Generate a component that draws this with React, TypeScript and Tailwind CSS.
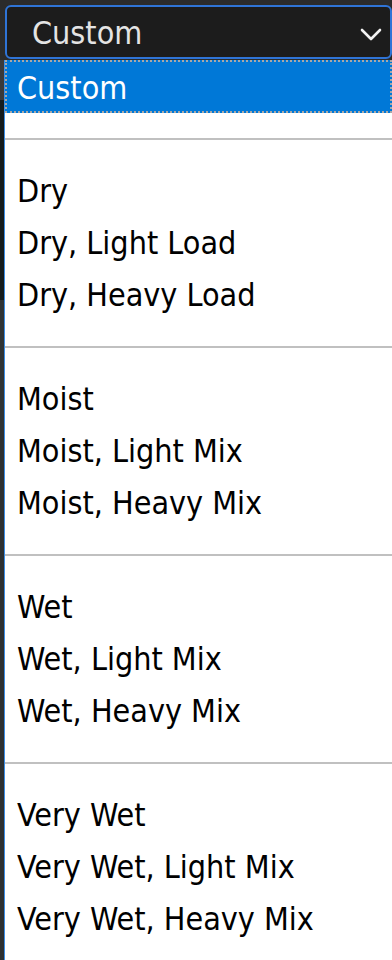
const groups: string[][] = [
  ['Dry', 'Dry, Light Load', 'Dry, Heavy Load'],
  ['Moist', 'Moist, Light Mix', 'Moist, Heavy Mix'],
  ['Wet', 'Wet, Light Mix', 'Wet, Heavy Mix'],
  ['Very Wet', 'Very Wet, Light Mix', 'Very Wet, Heavy Mix'],
]

const font = "font-['DejaVu_Sans_Condensed','Liberation_Sans',sans-serif]"

function Separator() {
  return (
    <div className='h-[52px] flex items-center'>
      <div className='h-[2px] w-full bg-[#c0c0c0]' />
    </div>
  )
}

function Option({ label }: { label: string }) {
  return (
    <div className='h-[52px] leading-[52px] pl-[12px] text-[32px] text-black whitespace-nowrap'>
      {label}
    </div>
  )
}

export default function App() {
  return (
    <div className={`w-[392px] h-[960px] overflow-hidden bg-[#2b2b2b] ${font}`}>
      {/* select box */}
      <div className='h-[60px] pt-[5px] pl-[5px]'>
        <div className='h-[54px] w-[387px] rounded-[6px] border-2 border-[#2f74d6] bg-[#1c1c1c] flex items-center justify-between pl-[25px] pr-[8px]'>
          <span className='text-[32px] leading-none text-[#e4e4e4] pt-[1px]'>Custom</span>
          <svg width='22' height='14' viewBox='0 0 22 14' className='mt-[5px]'>
            <path d='M2 2 L11 11 L20 2' fill='none' stroke='#f2f2f2' strokeWidth='2.6' strokeLinecap='round' strokeLinejoin='round' />
          </svg>
        </div>
      </div>

      {/* dropdown list */}
      <div className='flex h-[900px]'>
        <div className='w-[4px] flex flex-col'>
          <div className='h-[40px] bg-[#3a3a3a]' />
          <div className='h-[200px] bg-[#141b1e]' />
          <div className='h-[130px] bg-[#2f3335]' />
          <div className='flex-1 bg-[#2c3032]' />
        </div>
        <div className='flex-1 bg-white border-l border-[#3b8ee8]'>
          <div className='h-[53px] leading-[52px] bg-[#0078d7] border-2 border-dotted border-[#a8a8a8] pl-[10px] text-[32px] text-white whitespace-nowrap'>
            Custom
          </div>
          {groups.map((g, i) => (
            <div key={i}>
              <Separator />
              {g.map((o) => (
                <Option key={o} label={o} />
              ))}
            </div>
          ))}
        </div>
      </div>
    </div>
  )
}
